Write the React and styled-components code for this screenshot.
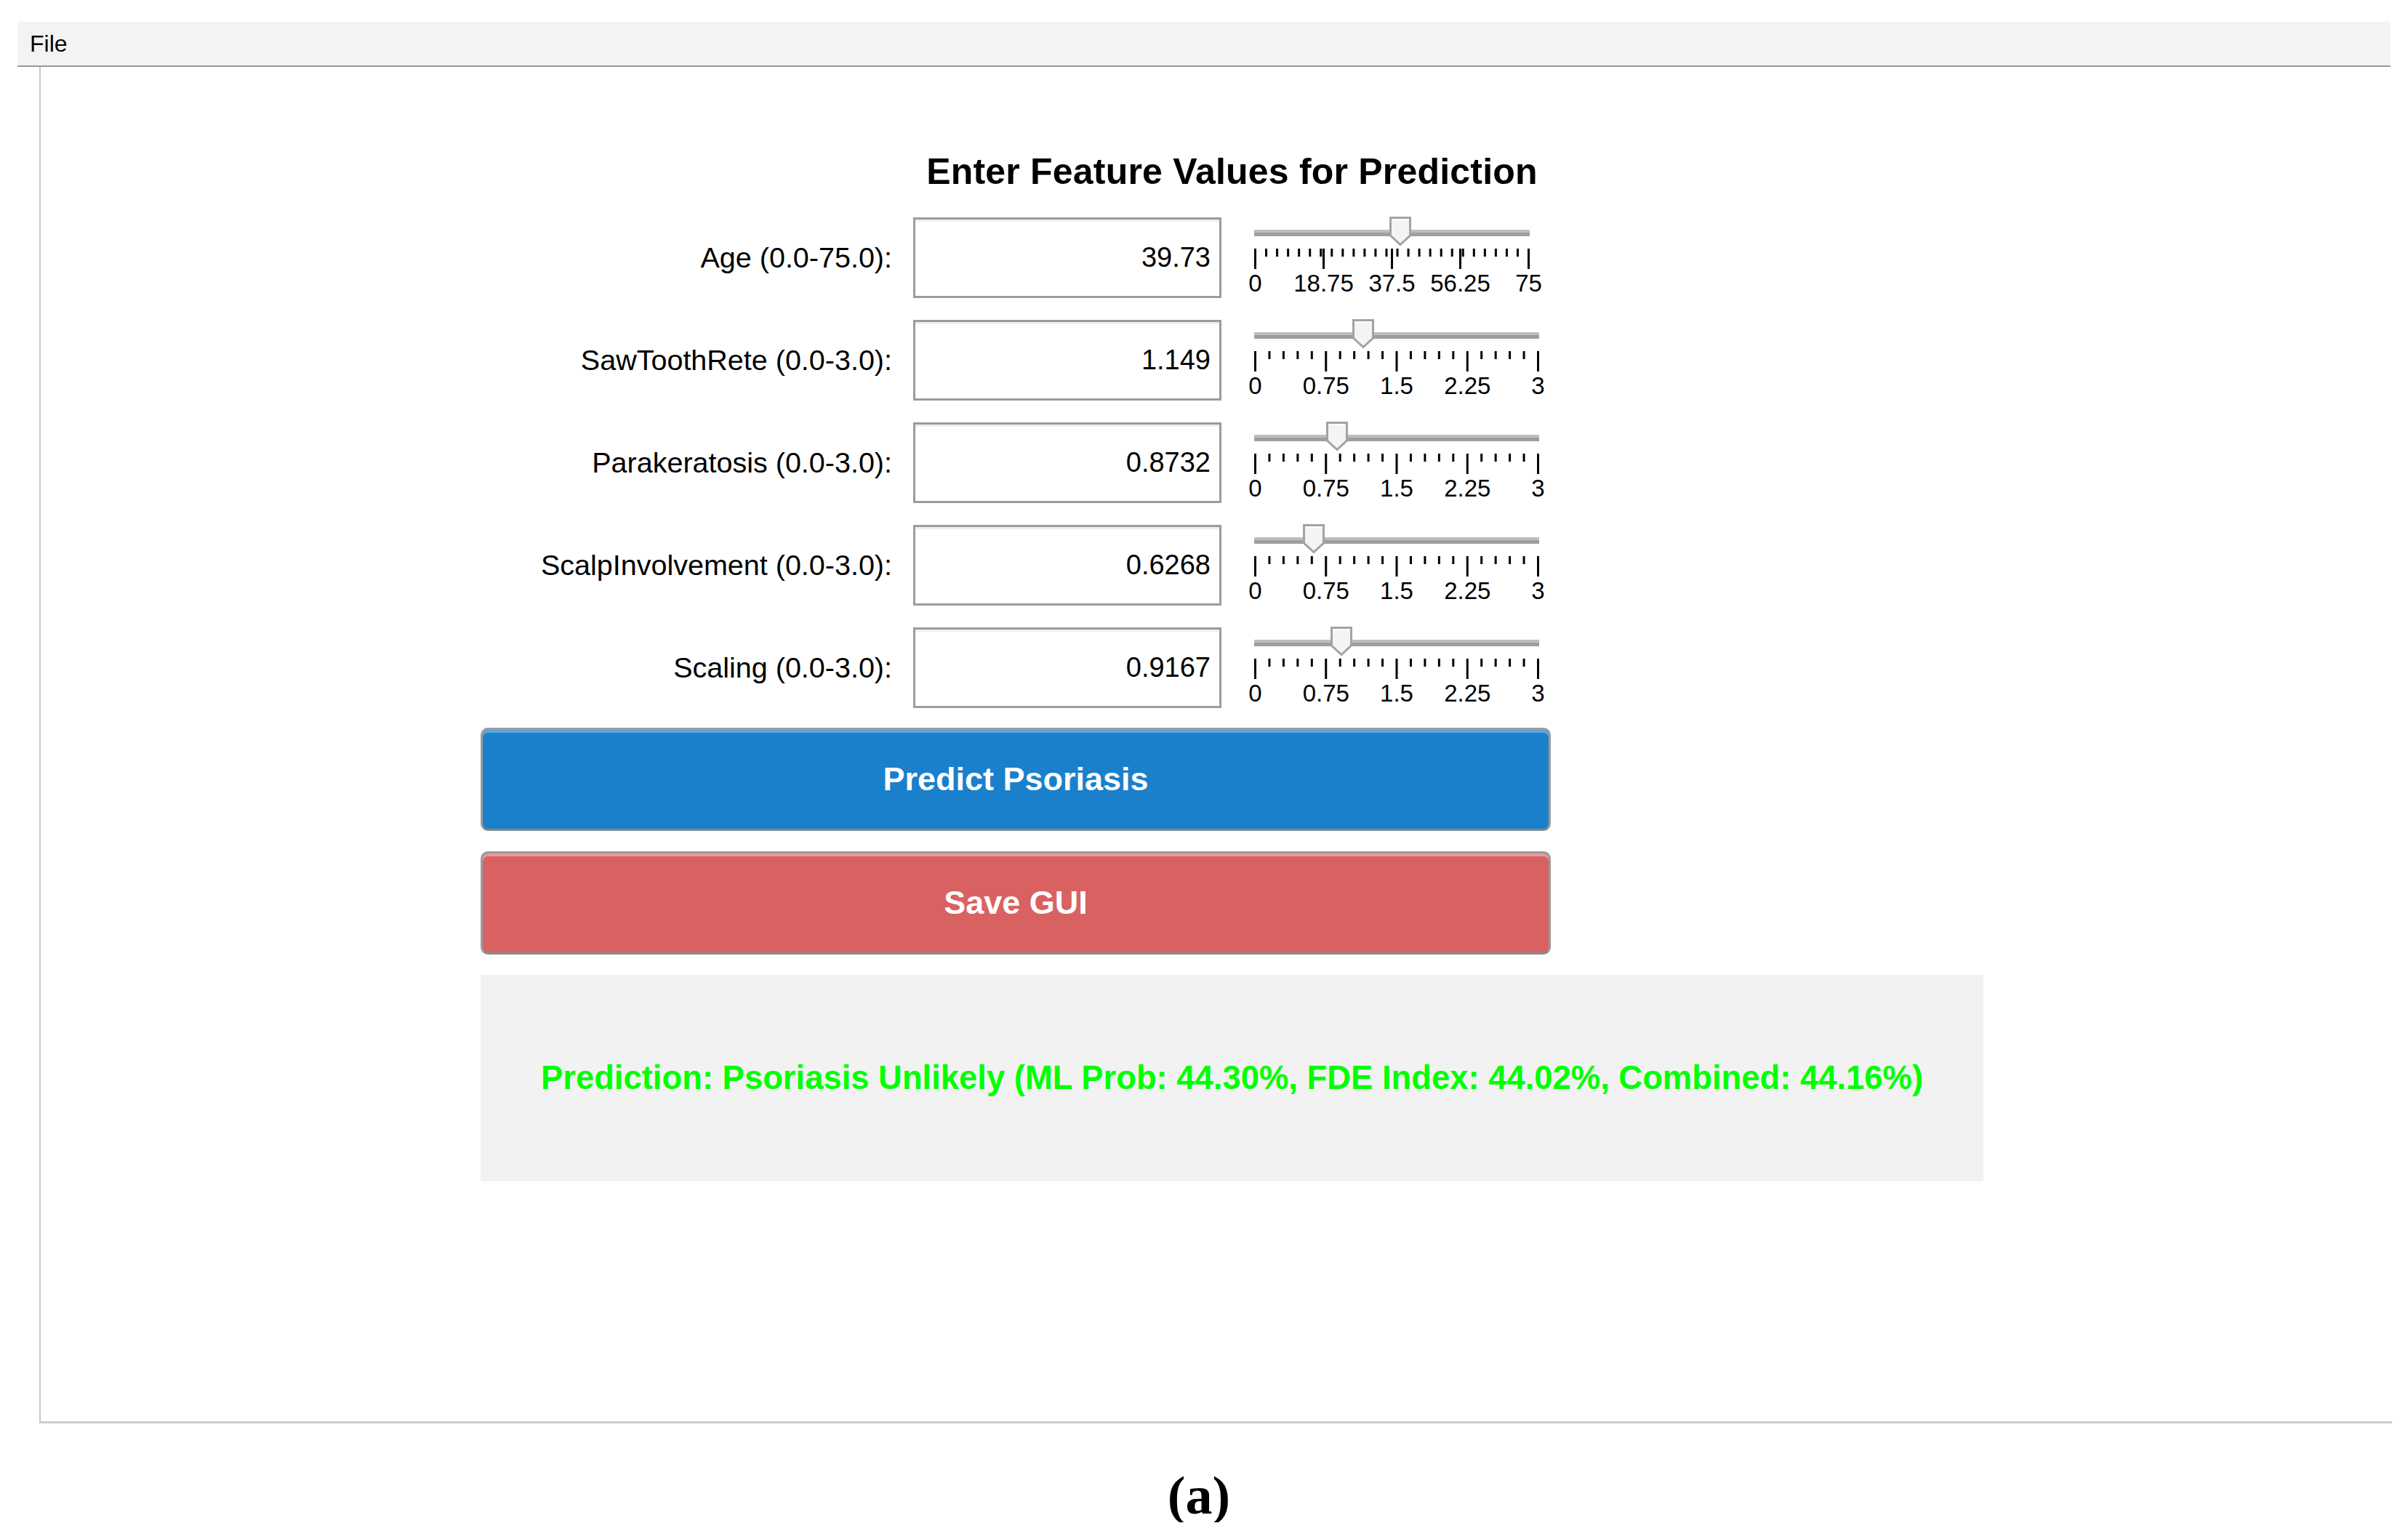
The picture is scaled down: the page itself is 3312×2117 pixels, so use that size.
import React from "react";
import styled, { createGlobalStyle } from "styled-components";

const GlobalStyle = createGlobalStyle`
  html, body {
    margin: 0;
    padding: 0;
    background: #ffffff;
  }
  body {
    font-family: "Liberation Sans", Arial, Helvetica, sans-serif;
    color: #000;
  }
`;

const SPage = styled.div`
  width: 3312px;
  padding-top: 30px;
`;

const SMenuBar = styled.div`
  box-sizing: border-box;
  margin-left: 24px;
  width: 3264px;
  height: 62px;
  background: #f3f3f3;
  border-bottom: 2px solid #999999;
  display: flex;
  align-items: center;
  padding-left: 17px;
  font-size: 32px;
`;

const SPanel = styled.div`
  box-sizing: border-box;
  margin-left: 54px;
  width: 3236px;
  height: 1866px;
  border-left: 2px solid #c8c8c8;
  border-bottom: 3px solid #cccccc;
  padding-top: 119px;
  padding-left: 605px;
`;

const SForm = styled.div`
  width: 2067px;
  display: flex;
  flex-direction: column;
`;

const STitle = styled.h1`
  margin: 0 0 38px 0;
  font-size: 50px;
  line-height: 50px;
  font-weight: 700;
  letter-spacing: 0.2px;
  text-align: center;
`;

const SRows = styled.div`
  display: flex;
  flex-direction: column;
  gap: 30px;
`;

const SRow = styled.div`
  display: grid;
  grid-template-columns: 566px 424px auto;
  column-gap: 29px;
  align-items: center;
  height: 111px;
`;

const SLabel = styled.div`
  font-size: 39.5px;
  text-align: right;
  white-space: nowrap;
`;

const SValueBox = styled.div`
  box-sizing: border-box;
  height: 111px;
  border: 3px solid #9c9c9c;
  background: #fff;
  box-shadow: inset 0 3px 0 #efefef;
  display: flex;
  align-items: center;
  justify-content: flex-end;
  padding-right: 12px;
  font-size: 38px;
`;

const SSlider = styled.div`
  position: relative;
  align-self: start;
  margin-left: 16px;
  width: ${(p) => p.w}px;
  padding-top: 17px;
`;

const STrack = styled.div`
  height: 5px;
  border-top: 4px solid #bebebe;
  background: #9e9e9e;
`;

const SThumb = styled.svg`
  position: absolute;
  top: -1px;
  width: 30px;
  height: 40px;
  overflow: visible;
`;

const STicks = styled.svg`
  display: block;
  margin-top: 17px;
  height: 28px;
  overflow: visible;
`;

const STickLabels = styled.div`
  position: relative;
  margin-top: 3px;
  height: 33px;
`;

const STickLabel = styled.span`
  position: absolute;
  top: 0;
  transform: translateX(-50%);
  font-size: 33px;
  line-height: 33px;
  white-space: nowrap;
`;

const SButton = styled.button`
  box-sizing: border-box;
  width: 1472px;
  height: 142px;
  margin-top: ${(p) => p.mt}px;
  border: 3px solid #9b9b9b;
  border-bottom-color: #8a8a8a;
  border-radius: 10px;
  background: ${(p) => p.bg};
  box-shadow: inset 0 4px 0 ${(p) => p.hl};
  color: #ffffff;
  font-family: "Liberation Sans", Arial, sans-serif;
  font-size: 45px;
  font-weight: 700;
  padding: 0;
  cursor: pointer;
`;

const SResult = styled.div`
  margin-top: 28px;
  height: 284px;
  background: #f2f2f2;
  display: flex;
  align-items: center;
  justify-content: center;
  color: #00ff00;
  font-size: 45.4px;
  font-weight: 700;
  white-space: nowrap;
`;

const SCaption = styled.div`
  margin-top: 62px;
  padding-right: 14px;
  text-align: center;
  font-family: "Liberation Serif", "Times New Roman", serif;
  font-weight: 700;
  font-size: 74px;
  line-height: 74px;
`;

const features = [
  { label: "Age (0.0-75.0):", value: "39.73", v: 39.73, max: 75, step: 3, w: 379, marks: ["0", "18.75", "37.5", "56.25", "75"] },
  { label: "SawToothRete (0.0-3.0):", value: "1.149", v: 1.149, max: 3, step: 0.15, w: 392, marks: ["0", "0.75", "1.5", "2.25", "3"] },
  { label: "Parakeratosis (0.0-3.0):", value: "0.8732", v: 0.8732, max: 3, step: 0.15, w: 392, marks: ["0", "0.75", "1.5", "2.25", "3"] },
  { label: "ScalpInvolvement (0.0-3.0):", value: "0.6268", v: 0.6268, max: 3, step: 0.15, w: 392, marks: ["0", "0.75", "1.5", "2.25", "3"] },
  { label: "Scaling (0.0-3.0):", value: "0.9167", v: 0.9167, max: 3, step: 0.15, w: 392, marks: ["0", "0.75", "1.5", "2.25", "3"] },
];

const majors = [0, 0.25, 0.5, 0.75, 1];

const Slider = ({ f }) => {
  const n = Math.round(f.max / f.step);
  const minors = [];
  for (let i = 0; i <= n; i++) {
    const t = (i * f.step) / f.max;
    if (!majors.some((m) => Math.abs(m - t) < 1e-6)) minors.push(t);
  }
  const x = (t) => 1.5 + t * (f.w - 3);
  return (
    <SSlider w={f.w}>
      <STrack />
      <SThumb viewBox="0 0 30 40" style={{ left: (f.v / f.max) * f.w - 15 }}>
        <path
          d="M1.5 1.5 H28.5 V26 L15 38.5 L1.5 26 Z"
          fill="#f4f4f4"
          stroke="#a3a3a3"
          strokeWidth="3"
        />
        <line x1="3" y1="4" x2="27" y2="4" stroke="#ffffff" strokeWidth="2" />
      </SThumb>
      <STicks width={f.w} viewBox={`0 0 ${f.w} 28`}>
        {minors.map((t, i) => (
          <line key={"m" + i} x1={x(t)} x2={x(t)} y1="0" y2="11" stroke="#000" strokeWidth="3" />
        ))}
        {majors.map((t, i) => (
          <line key={"M" + i} x1={x(t)} x2={x(t)} y1="0" y2="28" stroke="#000" strokeWidth="3" />
        ))}
      </STicks>
      <STickLabels>
        {f.marks.map((m, i) => (
          <STickLabel key={m} style={{ left: x(majors[i]) }}>
            {m}
          </STickLabel>
        ))}
      </STickLabels>
    </SSlider>
  );
};

const App = () => (
  <SPage>
    <GlobalStyle />
    <SMenuBar>File</SMenuBar>
    <SPanel>
      <SForm>
        <STitle>Enter Feature Values for Prediction</STitle>
        <SRows>
          {features.map((f) => (
            <SRow key={f.label}>
              <SLabel>{f.label}</SLabel>
              <SValueBox>{f.value}</SValueBox>
              <Slider f={f} />
            </SRow>
          ))}
        </SRows>
        <SButton mt={27} bg="#1b80cb" hl="#5ea7dc">
          Predict Psoriasis
        </SButton>
        <SButton mt={28} bg="#d86262" hl="#e89a9a">
          Save GUI
        </SButton>
        <SResult>
          Prediction: Psoriasis Unlikely (ML Prob: 44.30%, FDE Index: 44.02%, Combined: 44.16%)
        </SResult>
      </SForm>
    </SPanel>
    <SCaption>(a)</SCaption>
  </SPage>
);

export default App;
